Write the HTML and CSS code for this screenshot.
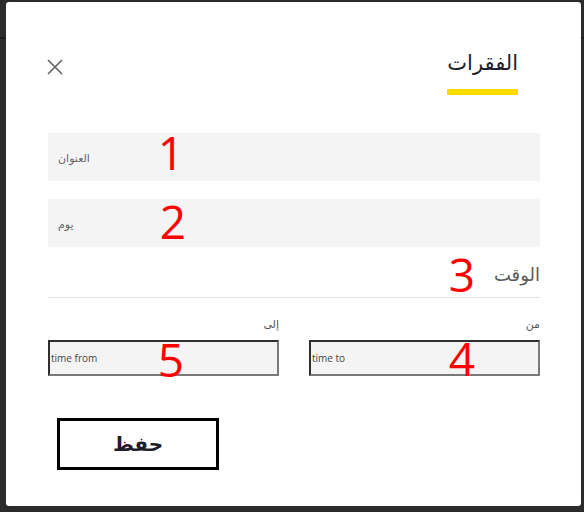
FILE: index.html
```html
<!DOCTYPE html>
<html lang="ar">
<head>
<meta charset="utf-8">
<title>الفقرات</title>
<link rel="stylesheet" href="styles.css">
</head>
<body>
<div class="modal" dir="rtl">
  <div class="header">
    <h2 class="title">الفقرات</h2>
    <button class="close" aria-label="close">
      <svg width="16" height="16" viewBox="0 0 16 16"><path d="M1 1 L15 15 M15 1 L1 15" stroke="#666" stroke-width="1.7" fill="none"/></svg>
    </button>
  </div>
  <div class="field big"><span>العنوان</span></div>
  <div class="field big second"><span>يوم</span></div>
  <div class="section">الوقت</div>
  <div class="times">
    <div class="col">
      <div class="lbl">من</div>
      <div class="field time"><span>time to</span></div>
    </div>
    <div class="col">
      <div class="lbl">إلى</div>
      <div class="field time"><span>time from</span></div>
    </div>
  </div>
  <div class="actions">
    <button class="save">حفظ</button>
  </div>
  <span class="num n1">1</span>
  <span class="num n2">2</span>
  <span class="num n3">3</span>
  <span class="num n4">4</span>
  <span class="num n5">5</span>
</div>
</body>
</html>
```
FILE: styles.css
```css
html, body {
  margin: 0;
  padding: 0;
}
body {
  width: 584px;
  height: 512px;
  overflow: hidden;
  background: linear-gradient(to bottom, #2b2b2b 0, #2b2b2b 37px, #1c1c1c 37px, #1c1c1c 39px, #2b2b2b 39px);
  font-family: "Open Sans", "DejaVu Sans", sans-serif;
  padding-top: 2px;
  box-sizing: border-box;
}
.modal {
  position: relative;
  margin-left: 6px;
  width: 575px;
  height: 504px;
  background: #fff;
  border-radius: 3px;
  box-sizing: border-box;
  padding: 0 41px 0 42px;
}
.header {
  display: flex;
  justify-content: space-between;
  align-items: flex-start;
  padding-top: 44px;
  padding-right: 22px;
}
.title {
  margin: 0;
  font-family: "DejaVu Sans", sans-serif;
  font-size: 21px;
  font-weight: 400;
  line-height: 34px;
  color: #1d1d2b;
  padding-bottom: 9px;
  border-bottom: 6px solid #ffdd00;
}
.close {
  border: 0;
  background: none;
  padding: 0;
  margin-top: 13px;
  margin-left: -1px;
  width: 16px;
  height: 16px;
  display: flex;
}
.field {
  background: #f4f4f4;
  box-sizing: border-box;
  display: flex;
  align-items: center;
  direction: ltr;
  color: #666;
}
.field.big {
  height: 48px;
  margin-top: 38px;
  padding-left: 10px;
  font-size: 11px;
}
.field.big.second {
  margin-top: 18px;
}
.section {
  margin-top: 15px;
  font-size: 18px;
  line-height: 24px;
  color: #5a5a5a;
  padding-bottom: 11px;
  border-bottom: 1px solid #e2e2e2;
}
.times {
  display: grid;
  grid-template-columns: 1fr 1fr;
  column-gap: 30px;
  margin-top: 18px;
}
.lbl {
  font-size: 11px;
  line-height: 16px;
  color: #555;
  margin-bottom: 8px;
}
.field.time {
  height: 36px;
  border-style: solid;
  border-width: 2px;
  border-color: #2f2f2f #7a7a7a #7a7a7a #2f2f2f;
  padding-left: 1px;
  font-size: 10px;
  color: #444;
}
.actions {
  display: flex;
  justify-content: flex-end;
  padding-left: 9px;
  margin-top: 42px;
}
.save {
  width: 162px;
  height: 52px;
  border: 3px solid #000;
  background: #fff;
  font-family: "DejaVu Sans", sans-serif;
  font-weight: 700;
  font-size: 20px;
  color: #1d1d2b;
  padding: 0;
}
.num {
  position: absolute;
  width: 40px;
  text-align: center;
  font-family: "Open Sans", sans-serif;
  font-size: 46px;
  line-height: 1;
  color: #ff0000;
}
.n1 { left: 145px; top: 127px; }
.n2 { left: 147px; top: 196px; }
.n3 { left: 436px; top: 249px; }
.n4 { left: 436px; top: 333px; }
.n5 { left: 145px; top: 334px; }
```
